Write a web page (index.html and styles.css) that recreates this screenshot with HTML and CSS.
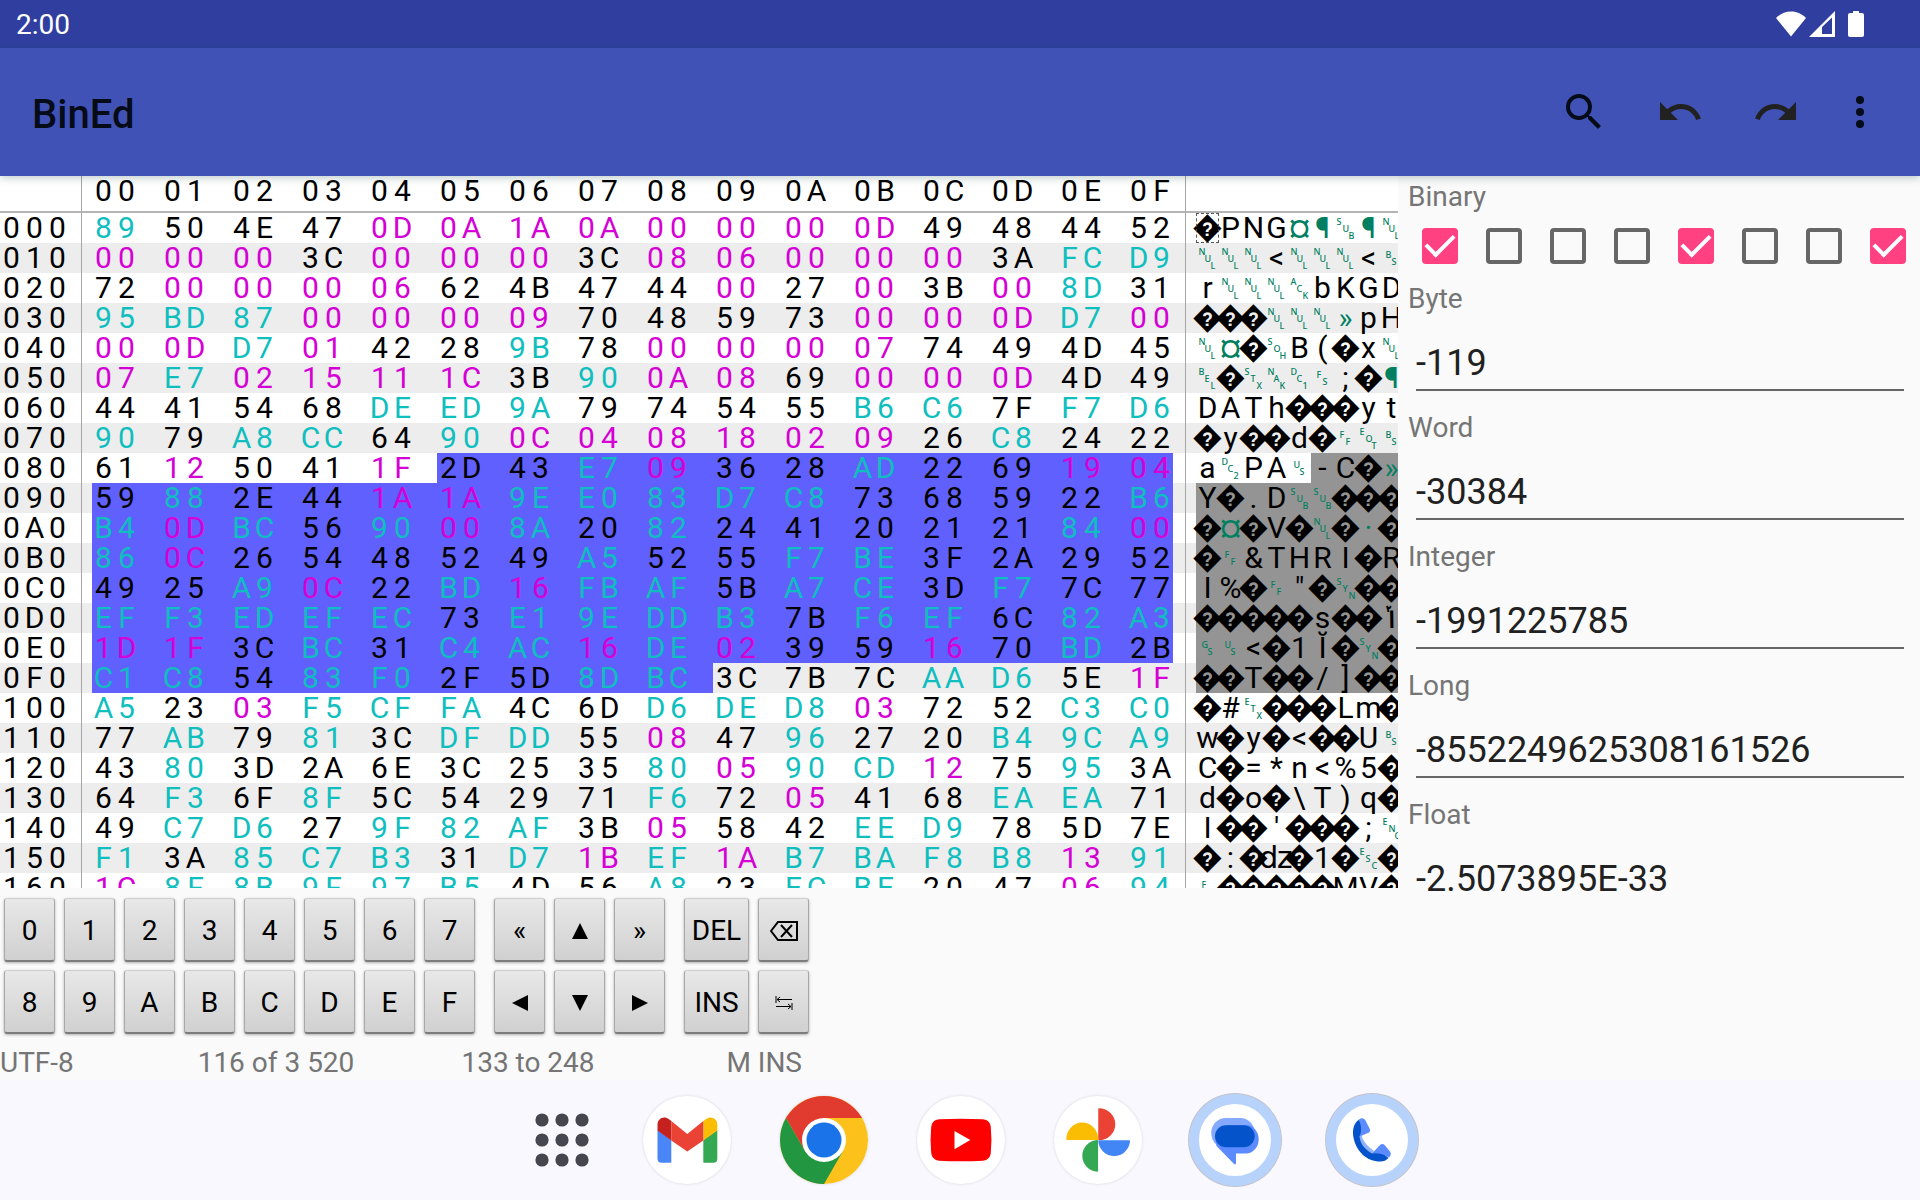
FILE: index.html
```html
<!DOCTYPE html>
<html lang="en">
<head>
    <meta charset="UTF-8">
    <meta name="viewport" content="width=device-width, initial-scale=1.0">
    <title>BinEd</title>
    <link rel="stylesheet" href="styles.css">
</head>
<body>
    <div class="status-bar">
        <span class="clock">2:00</span>
        <div class="status-icons">
            <svg width="30" height="26" viewBox="0 0 30 26"><path d="M15 25.500L0 7C4 3 9 .5 15 .5S26 3 30 7z"/></svg>
            <svg width="26" height="26" viewBox="0 0 26 26"><path fill-rule="evenodd" d="M0 26L26 0v26zM13 16v7h10V6.500z"/></svg>
            <svg class="battery" width="16" height="26" viewBox="0 0 16 26"><path d="M5 0h6v2h3a2 2 0 0 1 2 2v20a2 2 0 0 1-2 2H2a2 2 0 0 1-2-2V4a2 2 0 0 1 2-2h3z"/></svg>
        </div>
    </div>
    <header class="toolbar">
        <h1>BinEd</h1>
        <div class="actions">
            <button type="button" aria-label="Search"><svg viewBox="0 0 24 24"><path d="M15.500 14h-.79l-.28-.27A6.471 6.471 0 0 0 16 9.500 6.500 6.500 0 1 0 9.500 16c1.610 0 3.090-.59 4.230-1.570l.27.28v.79l5 4.990L20.490 19l-4.990-5zm-6 0C7.010 14 5 11.990 5 9.500S7.010 5 9.500 5 14 7.010 14 9.500 11.990 14 9.500 14z"/></svg></button>
            <button type="button" class="soft" aria-label="Undo"><svg viewBox="0 0 24 24"><path d="M12.500 8c-2.650 0-5.050.99-6.900 2.600L2 7v9h9l-3.620-3.620c1.390-1.160 3.160-1.880 5.120-1.880 3.540 0 6.550 2.310 7.600 5.500l2.370-.78C21.080 11.030 17.150 8 12.500 8z"/></svg></button>
            <button type="button" class="soft" aria-label="Redo"><svg viewBox="0 0 24 24"><path d="M18.400 10.600C16.550 8.990 14.150 8 11.500 8c-4.650 0-8.580 3.030-9.960 7.220L3.900 16c1.050-3.190 4.050-5.500 7.600-5.500 1.950 0 3.730.72 5.120 1.880L13 16h9V7l-3.600 3.600z"/></svg></button>
            <button type="button" class="more" aria-label="More options"><svg viewBox="0 0 24 24"><circle cx="12" cy="6" r="2"/><circle cx="12" cy="12" r="2"/><circle cx="12" cy="18" r="2"/></svg></button>
        </div>
    </header>

    <main class="work">
        <div class="hex-view">
            <table class="hex">
                <thead><tr id="hex-head"></tr></thead>
                <tbody id="hex-body"></tbody>
            </table>
        </div>
        <form class="values">
            <fieldset>
                <legend>Binary</legend>
                <div class="bits">
                    <input type="checkbox" aria-label="Bit 7" checked>
                    <input type="checkbox" aria-label="Bit 6">
                    <input type="checkbox" aria-label="Bit 5">
                    <input type="checkbox" aria-label="Bit 4">
                    <input type="checkbox" aria-label="Bit 3" checked>
                    <input type="checkbox" aria-label="Bit 2">
                    <input type="checkbox" aria-label="Bit 1">
                    <input type="checkbox" aria-label="Bit 0" checked>
                </div>
            </fieldset>
            <label for="byte">Byte</label>
            <input type="text" id="byte" value="-119">
            <label for="word">Word</label>
            <input type="text" id="word" value="-30384">
            <label for="integer">Integer</label>
            <input type="text" id="integer" value="-1991225785">
            <label for="long">Long</label>
            <input type="text" id="long" value="-8552249625308161526">
            <label for="float">Float</label>
            <input type="text" id="float" value="-2.5073895E-33">
        </form>
    </main>

    <section class="keypad">
        <div class="key-group digits">
            <button type="button">0</button>
            <button type="button">1</button>
            <button type="button">2</button>
            <button type="button">3</button>
            <button type="button">4</button>
            <button type="button">5</button>
            <button type="button">6</button>
            <button type="button">7</button>
            <button type="button">8</button>
            <button type="button">9</button>
            <button type="button">A</button>
            <button type="button">B</button>
            <button type="button">C</button>
            <button type="button">D</button>
            <button type="button">E</button>
            <button type="button">F</button>
        </div>
        <div class="key-group arrows">
            <button type="button">«</button>
            <button type="button" aria-label="Up"><svg width="16" height="16" viewBox="0 0 16 16"><path d="M8 0l8 16H0z"/></svg></button>
            <button type="button">»</button>
            <button type="button" aria-label="Left"><svg width="16" height="16" viewBox="0 0 16 16"><path d="M0 8l16-8v16z"/></svg></button>
            <button type="button" aria-label="Down"><svg width="16" height="16" viewBox="0 0 16 16"><path d="M8 16l8-16H0z"/></svg></button>
            <button type="button" aria-label="Right"><svg width="16" height="16" viewBox="0 0 16 16"><path d="M16 8L0 0v16z"/></svg></button>
        </div>
        <div class="key-group edit">
            <button type="button">DEL</button>
            <button type="button" aria-label="Backspace"><svg class="line" width="28" height="20" viewBox="0 0 28 20"><path d="M1 10l7-9h19v18H8zM11 4l11 12M22 4L11 16"/></svg></button>
            <button type="button">INS</button>
            <button type="button" aria-label="Tab"><svg class="line thin" width="18" height="14" viewBox="0 0 18 14"><path d="M1 0v7M17 3.500H2M5 1L2 3.500 5 6M17 7v7M1 10.500h15M13 8l3 2.500-3 2.500"/></svg></button>
        </div>
    </section>
    <div class="info">
        <span>UTF-8</span>
        <span>116 of 3 520</span>
        <span>133 to 248</span>
        <span>M INS</span>
    </div>

    <nav class="taskbar">
        <a href="#apps" class="apps" aria-label="All apps">
            <svg width="54" height="54" viewBox="0 0 54 54"><g fill="#46464f"><circle cx="7" cy="7" r="6.600"/><circle cx="27" cy="7" r="6.600"/><circle cx="47" cy="7" r="6.600"/><circle cx="7" cy="27" r="6.600"/><circle cx="27" cy="27" r="6.600"/><circle cx="47" cy="27" r="6.600"/><circle cx="7" cy="47" r="6.600"/><circle cx="27" cy="47" r="6.600"/><circle cx="47" cy="47" r="6.600"/></g></svg>
        </a>
        <a href="#gmail" class="disc" aria-label="Gmail">
            <svg viewBox="0 0 88 88">
                <path fill="#4a86f7" d="M14.500 34L28.300 44v22.700H18.500a4 4 0 0 1-4-4z"/>
                <path fill="#35a853" d="M74.300 34L60.300 44v22.700h10a4 4 0 0 0 4-4z"/>
                <path fill="#c5221f" d="M14.500 34.500v-6c0-6 6.500-9 11.500-5.300l2.300 1.800v19.500z"/>
                <path fill="#fbbc04" d="M74.300 34.500v-6c0-6-6.500-9-11.500-5.300L60.300 25v19.500z"/>
                <path fill="#ea4335" d="M28.300 25l16 13 16-13v19.500l-16 11-16-11z"/>
            </svg>
        </a>
        <a href="#chrome" class="disc" aria-label="Chrome">
            <svg viewBox="0 0 88 88">
                <circle cx="44" cy="44" r="44" fill="#fcc21b"/>
                <path fill="#e03b2e" d="M5.900 22A44 44 0 0 1 82.100 22H44v22L25 55z"/>
                <path fill="#239642" d="M5.900 22A44 44 0 0 0 44 88l19-33-19-11-19 11z"/>
                <circle cx="44" cy="44" r="22" fill="#fff"/>
                <circle cx="44" cy="44" r="17.500" fill="#1a73e8"/>
            </svg>
        </a>
        <a href="#youtube" class="disc" aria-label="YouTube">
            <svg viewBox="0 0 88 88">
                <path fill="#f00" d="M22 23.300q22-1.300 44 0 7 .7 7.800 7.700 1.300 13 0 26-.8 7-7.800 7.700-22 1.300-44 0-7-.7-7.800-7.700-1.300-13 0-26 .8-7 7.800-7.700z"/>
                <path fill="#fff" d="M37.500 35v18.200L53.300 44z"/>
            </svg>
        </a>
        <a href="#photos" class="disc" aria-label="Photos">
            <svg viewBox="0 0 88 88" stroke-width="1.500" stroke-linejoin="round">
                <path fill="#ea4335" stroke="#ea4335" d="M45 13a15.500 15.200 0 0 1 0 30.500z"/>
                <path fill="#fbbc04" stroke="#fbbc04" d="M13 43.300a15.200 16 0 0 1 30.500 0z"/>
                <path fill="#34a853" stroke="#34a853" d="M43.300 75a15.500 15.200 0 0 1 0-30.300z"/>
                <path fill="#4285f4" stroke="#4285f4" d="M45 45h30.300a15.200 15.500 0 0 1-30.300 0z"/>
            </svg>
        </a>
        <a href="#messages" class="disc ring" aria-label="Messages">
            <svg viewBox="0 0 88 88">
                <rect x="20.300" y="22" width="43.400" height="30" rx="14.500" fill="#84a9ff"/>
                <path fill="#5b8bff" d="M24 43a14 14 0 0 1 14-14h17a12.500 14 0 0 1 0 28.500H45V67q-.5 2.500-2.500.5L25.500 50z"/>
                <rect x="24" y="29.300" width="39.700" height="22" rx="11" fill="#0453cb"/>
            </svg>
        </a>
        <a href="#phone" class="disc ring" aria-label="Phone">
            <svg viewBox="0 0 88 88">
                <path fill="#8fb2ff" d="M29 39l4-1c2 7 6 12 13 17l-3 4c-8-5-12-11-14-20z"/>
                <path fill="#0453cb" d="M31 23.500C25 28 24 35 25.800 43 29 56 39 65.500 52 65.500c4 0 6-1 8.500-3.500L50 53l-6 4.500C36 53 32 47 31.500 40l5-5z"/>
                <path fill="#5b8bff" d="M31 23.500q4-3 6.500 1l4.300 8.500q1 3-2 4l-8 3.500q3-8-.8-17zM44 57.500l8-8.500q2.500-2 5 .5l5 6q2 3-1 6-8-5-17-4z"/>
            </svg>
        </a>
    </nav>
    <script src="script.js"></script>
</body>
</html>
```

FILE: styles.css
```css
:root {
    --primary: #4052b5;
    --primary-dark: #303f9f;
    --accent: #ff4081;
    --background: #fafafa;
    --stripe: #ededed;
    --line: #a6a6a6;
    --selection: #6060ff;
    --selection-mirror: #949494;
    --control: #d500d5;
    --high: #0fbebe;
    --symbol: #008060;
    --muted: #757575;
    --cell: 23px;
}
* {
    box-sizing: border-box;
}
body {
    margin: 0;
    height: 100vh;
    display: flex;
    flex-direction: column;
    overflow: hidden;
    background-color: var(--background);
    color: #000;
    font-family: Roboto, "DejaVu Sans", sans-serif;
    font-size: 28px;
}
button, input {
    font: inherit;
    color: inherit;
}

/* Status bar and toolbar */
.status-bar {
    display: flex;
    align-items: center;
    justify-content: space-between;
    height: 48px;
    padding: 0 56px 0 16px;
    background-color: var(--primary-dark);
    color: #fff;
}
.clock {
    padding-top: 2px;
    line-height: 46px;
}
.status-icons {
    display: flex;
    gap: 3px;
    fill: #fff;
}
.battery {
    margin-left: 10px;
}
.toolbar {
    position: relative;
    display: flex;
    align-items: center;
    justify-content: space-between;
    height: 128px;
    padding: 0 24px 0 32px;
    background-color: var(--primary);
    box-shadow: 0 2px 8px rgba(0, 60, 50, 0.25);
}
.toolbar h1 {
    margin: 0;
    padding-top: 5px;
    font-size: 40px;
    font-weight: 500;
    line-height: 48px;
    color: #060b18;
}
.actions {
    display: flex;
}
.actions button {
    display: flex;
    justify-content: center;
    width: 96px;
    padding: 24px 0;
    background: none;
    border: none;
    fill: #060b18;
}
.actions .soft {
    fill: #212121;
}
.actions .more {
    width: 72px;
}
.actions svg {
    width: 48px;
    height: 48px;
}

/* Hex table */
.work {
    flex: 1;
    min-height: 0;
    display: flex;
    overflow: hidden;
}
.hex-view {
    flex: 1;
    min-width: 0;
    margin-bottom: 4px;
    overflow: hidden;
    background-color: #fff;
}
.hex {
    min-width: 100%;
    border-collapse: separate;
    border-spacing: 0;
    font-size: 30px;
    line-height: 30px;
}
.hex th, .hex td {
    height: 30px;
    padding: 0;
    font-weight: 400;
    white-space: nowrap;
    text-align: left;
}
.hex thead th {
    height: 37px;
    padding-bottom: 5px;
    border-bottom: 2px solid #b4b4b4;
}
.hex tbody tr:nth-child(even) {
    background-color: var(--stripe);
}
.hex .address {
    min-width: 82px;
    border-right: 1px solid var(--line);
}
.hex .gap {
    min-width: 10px;
}
.hex .divider {
    min-width: 13px;
    border-right: 1px solid var(--line);
}
.row-chars {
    display: flex;
}
.row-chars span {
    display: flex;
    justify-content: center;
    width: var(--cell);
    height: 30px;
}
.hex .byte {
    padding-right: var(--cell);
}
.hex .byte.last {
    padding-right: 0;
}
.control {
    color: var(--control);
}
.high {
    color: var(--high);
}
.byte.selected {
    background-color: var(--selection);
}
.char.selected {
    background-color: var(--selection-mirror);
}
.symbol {
    color: var(--symbol);
}
/* control code names step down diagonally */
.code {
    display: grid;
    grid-auto-columns: 6px;
    grid-auto-rows: 7px;
    place-content: center;
    height: 30px;
    font-family: "Noto Sans", sans-serif;
    font-size: 9px;
    font-weight: 500;
    line-height: 7px;
}
.code i {
    font-style: normal;
}
.code i:nth-child(1) {
    grid-area: 1 / 1;
}
.code i:nth-child(2) {
    grid-area: 2 / 2;
}
.code i:nth-child(3) {
    grid-area: 3 / 3;
}
.caret {
    outline: 1px dashed #555;
    outline-offset: -1px;
}

/* Values panel */
.values {
    width: 522px;
    padding-left: 10px;
    color: #212121;
}
.values fieldset {
    margin: 0;
    padding: 0;
    border: none;
}
.values legend, .values label {
    display: block;
    height: 38px;
    padding: 4px 0 0;
    line-height: 34px;
    color: var(--muted);
}
.bits {
    display: grid;
    grid-template-columns: repeat(8, 1fr);
    height: 64px;
    align-items: center;
}
.bits input {
    appearance: none;
    width: 36px;
    height: 36px;
    margin: 0 0 0 14px;
    border: 4px solid #666;
    border-radius: 4px;
    display: grid;
    place-items: center;
}
.bits input:checked {
    border-color: var(--accent);
    background-color: var(--accent);
}
.bits input:checked::before {
    content: "";
    width: 24px;
    height: 12px;
    margin-bottom: 8px;
    border: solid #fff;
    border-width: 0 0 4px 4px;
    transform: rotate(-45deg);
}
.values input[type="text"] {
    display: block;
    width: calc(100% - 24px);
    height: 75px;
    margin: 0 16px 16px 8px;
    padding: 26px 0 5px;
    border: none;
    border-bottom: 2px solid #666;
    background: none;
    font-size: 36px;
    line-height: 42px;
}

/* Keypad */
.keypad {
    display: flex;
    gap: 19px;
    padding: 6px 4px 0;
}
.key-group {
    display: grid;
    grid-template-columns: repeat(3, 51px);
    gap: 8px 9px;
}
.key-group.digits {
    grid-template-columns: repeat(8, 51px);
}
.key-group.edit {
    grid-template-columns: 65px 51px;
}
.key-group button {
    display: flex;
    align-items: center;
    justify-content: center;
    height: 64px;
    padding: 2px 0 0;
    border: 1px solid #a8a8a8;
    border-top-color: #cfcfcf;
    border-bottom: 2px solid #7c7c7c;
    border-radius: 3px;
    background: linear-gradient(#e8e8e8, #d0d0d0);
    box-shadow: 0 1px 3px rgba(0, 0, 0, 0.3);
}
.line {
    fill: none;
    stroke: #000;
    stroke-width: 2;
}
.thin {
    stroke-width: 1;
}
.info {
    display: grid;
    grid-template-columns: 150px 252px 252px 148px;
    padding-top: 12px;
    line-height: 34px;
    color: var(--muted);
    text-align: center;
}
.info span:first-child {
    text-align: left;
}
.info span:last-child {
    text-align: right;
}

/* Taskbar */
.taskbar {
    display: flex;
    align-items: center;
    justify-content: center;
    gap: 49px;
    height: 120px;
    padding-left: 25px;
    background-color: #faf8ff;
}
.taskbar a {
    display: flex;
    align-items: center;
    justify-content: center;
}
.apps {
    width: 64px;
    height: 88px;
}
.disc {
    width: 88px;
    height: 88px;
    border-radius: 50%;
    background-color: #fff;
    box-shadow: 0 0 3px rgba(0, 0, 0, 0.15);
}
.disc svg {
    width: 88px;
    height: 88px;
    flex: none;
}
.ring {
    border: 8px solid #b8d3fb;
    box-shadow: 0 0 0 2px #b8d3fb, 0 0 0 3px #c4c4cc;
}
```

FILE: script.js
```javascript
const SELECTION_START = 133;
const SELECTION_END = 248;

const bytes = [
    "89 50 4E 47 0D 0A 1A 0A 00 00 00 0D 49 48 44 52",
    "00 00 00 3C 00 00 00 3C 08 06 00 00 00 3A FC D9",
    "72 00 00 00 06 62 4B 47 44 00 27 00 3B 00 8D 31",
    "95 BD 87 00 00 00 09 70 48 59 73 00 00 0D D7 00",
    "00 0D D7 01 42 28 9B 78 00 00 00 07 74 49 4D 45",
    "07 E7 02 15 11 1C 3B 90 0A 08 69 00 00 0D 4D 49",
    "44 41 54 68 DE ED 9A 79 74 54 55 B6 C6 7F F7 D6",
    "90 79 A8 CC 64 90 0C 04 08 18 02 09 26 C8 24 22",
    "61 12 50 41 1F 2D 43 E7 09 36 28 AD 22 69 19 04",
    "59 88 2E 44 1A 1A 9E E0 83 D7 C8 73 68 59 22 B6",
    "B4 0D BC 56 90 00 8A 20 82 24 41 20 21 21 84 00",
    "86 0C 26 54 48 52 49 A5 52 55 F7 BE 3F 2A 29 52",
    "49 25 A9 0C 22 BD 16 FB AF 5B A7 CE 3D F7 7C 77",
    "EF F3 ED EF EC 73 E1 9E DD B3 7B F6 EF 6C 82 A3",
    "1D 1F 3C BC 31 C4 AC 16 DE 02 39 59 16 70 BD 2B",
    "C1 C8 54 83 F0 2F 5D 8D BC 3C 7B 7C AA D6 5E 1F",
    "A5 23 03 F5 CF FA 4C 6D D6 DE D8 03 72 52 C3 C0",
    "77 AB 79 81 3C DF DD 55 08 47 96 27 20 B4 9C A9",
    "43 80 3D 2A 6E 3C 25 35 80 05 90 CD 12 75 95 3A",
    "64 F3 6F 8F 5C 54 29 71 F6 72 05 41 68 EA EA 71",
    "49 C7 D6 27 9F 82 AF 3B 05 58 42 EE D9 78 5D 7E",
    "F1 3A 85 C7 B3 31 D7 1B EF 1A B7 BA F8 B8 13 91",
    "1C 8F 8B 9F 97 B5 4D 56 A8 23 EC BE 20 47 06 94"
].map(row => row.split(" ").map(b => parseInt(b, 16)));

// two-byte characters, keyed by offset of the first byte
const wideChars = { 0xD8: "\u0773", 0xE5: "\u012C", 0x153: "\u01F3" };
const whitespace = { 0x09: "»", 0x0A: "¶", 0x0D: "¤", 0x20: "·" };
const codes = ("NUL SOH STX ETX EOT ENQ ACK BEL BS HT LF VT FF CR SO SI DLE DC1 DC2 DC3 DC4 " +
    "NAK SYN ETB CAN EM SUB ESC FS GS RS US").split(" ");

function hex(value, length) {
    return value.toString(16).toUpperCase().padStart(length, "0");
}

function cells(text) {
    return '<div class="row-chars">' + [...text].map(c => `<span>${c}</span>`).join("") + "</div>";
}

function plain(text) {
    return `<div class="row-chars"><span>${text}</span></div>`;
}

function preview(value, offset) {
    if (wideChars[offset]) return { html: plain(wideChars[offset]) };
    if (whitespace[value]) return { html: plain(whitespace[value]), symbol: true };
    if (value < 0x20) {
        const letters = [...codes[value]].map(c => `<i>${c}</i>`).join("");
        return { html: `<div class="code">${letters}</div>`, symbol: true };
    }
    if (value > 0x7E) return { html: plain("\uFFFD") };
    return { html: plain(String.fromCharCode(value).replace("&", "&amp;").replace("<", "&lt;")) };
}

let head = '<th class="address"></th><th class="gap"></th>';
for (let i = 0; i < 16; i++) {
    head += `<th class="byte${i === 15 ? " last" : ""}">${cells(hex(i, 2))}</th>`;
}
head += '<th class="divider"></th><th class="gap"></th><th colspan="9"></th>';
document.getElementById("hex-head").innerHTML = head;

document.getElementById("hex-body").innerHTML = bytes.map((row, r) => {
    let html = `<th class="address">${cells(hex(r * 16, 3))}</th><td class="gap"></td>`;
    const isSelected = i => r * 16 + i >= SELECTION_START && r * 16 + i <= SELECTION_END;
    row.forEach((value, i) => {
        let name = "byte";
        if (i === 15) name += " last";
        if (value < 0x20) name += " control";
        if (value > 0x7F) name += " high";
        if (isSelected(i)) name += " selected";
        html += `<td class="${name}">${cells(hex(value, 2))}</td>`;
    });
    html += '<td class="divider"></td><td class="gap"></td>';
    row.slice(0, 9).forEach((value, i) => {
        const c = preview(value, r * 16 + i);
        let name = "char";
        if (c.symbol) name += " symbol";
        if (isSelected(i)) name += " selected";
        if (r === 0 && i === 0) name += " caret";
        html += `<td class="${name}">${c.html}</td>`;
    });
    return `<tr>${html}</tr>`;
}).join("");
```
